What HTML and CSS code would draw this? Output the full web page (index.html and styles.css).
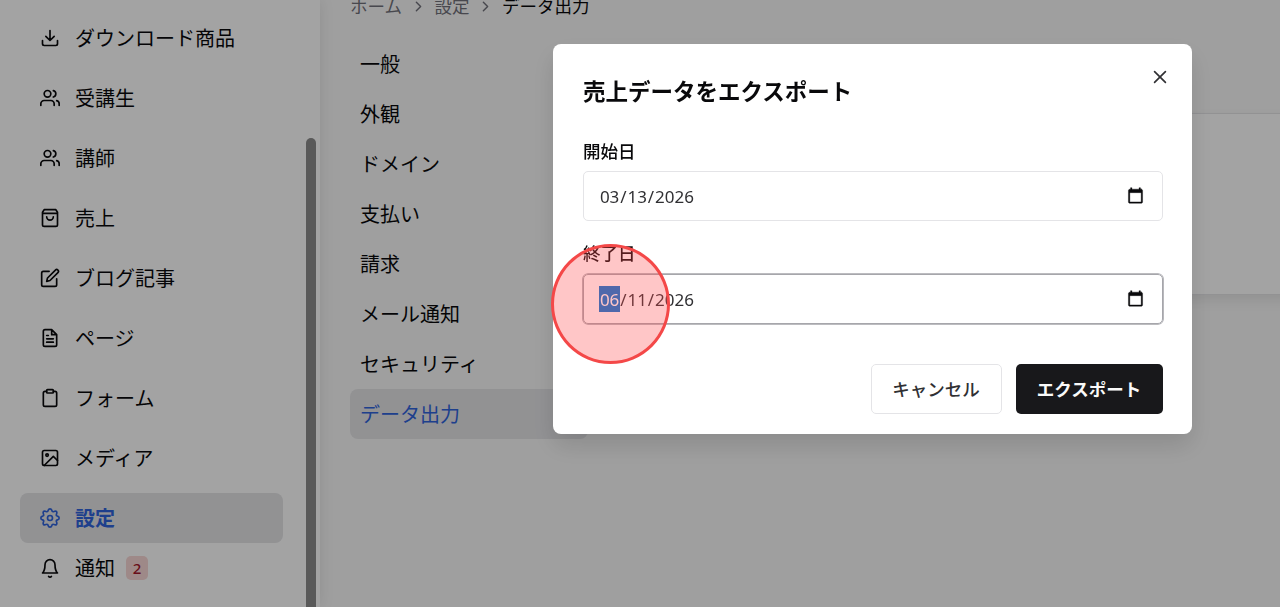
FILE: index.html
```html
<!DOCTYPE html>
<html lang="ja">
<head>
  <meta charset="UTF-8">
  <meta name="viewport" content="width=device-width, initial-scale=1.0">
  <title>データ出力</title>
  <link rel="stylesheet" href="styles.css">
</head>
<body>
  <div class="page">
    <aside class="sidebar">
      <nav class="nav">
        <a class="nav-item">
          <svg viewBox="0 0 24 24"><path d="M3 15v4a2 2 0 0 0 2 2h14a2 2 0 0 0 2-2v-4M12 3v12M7 10l5 5 5-5"/></svg>
          <span>ダウンロード商品</span>
        </a>
        <a class="nav-item">
          <svg viewBox="0 0 24 24"><path d="M17 21v-2a4 4 0 0 0-4-4H5a4 4 0 0 0-4 4v2M23 21v-2a4 4 0 0 0-3-3.870M16 3.130a4 4 0 0 1 0 7.750"/><circle cx="9" cy="7" r="4"/></svg>
          <span>受講生</span>
        </a>
        <a class="nav-item">
          <svg viewBox="0 0 24 24"><path d="M17 21v-2a4 4 0 0 0-4-4H5a4 4 0 0 0-4 4v2M23 21v-2a4 4 0 0 0-3-3.870M16 3.130a4 4 0 0 1 0 7.750"/><circle cx="9" cy="7" r="4"/></svg>
          <span>講師</span>
        </a>
        <a class="nav-item">
          <svg viewBox="0 0 24 24"><path d="M5 2L3 5v15a2 2 0 0 0 2 2h14a2 2 0 0 0 2-2V5l-2-3zM3 6.5h18M16 10.500a4 4 0 0 1-8 0"/></svg>
          <span>売上</span>
        </a>
        <a class="nav-item">
          <svg viewBox="0 0 24 24"><path d="M11 4H4a2 2 0 0 0-2 2v14a2 2 0 0 0 2 2h14a2 2 0 0 0 2-2v-7"/><path d="M18.500 2.500a2.120 2.120 0 0 1 3 3L12 15l-4 1 1-4z"/></svg>
          <span>ブログ記事</span>
        </a>
        <a class="nav-item">
          <svg viewBox="0 0 24 24"><path d="M14 2H6a2 2 0 0 0-2 2v16a2 2 0 0 0 2 2h12a2 2 0 0 0 2-2V8zM14 2v6h6M16 13H8M16 17H8M10 9H8"/></svg>
          <span>ページ</span>
        </a>
        <a class="nav-item">
          <svg viewBox="0 0 24 24"><path d="M16 4h2a2 2 0 0 1 2 2v14a2 2 0 0 1-2 2H6a2 2 0 0 1-2-2V6a2 2 0 0 1 2-2h2"/><rect x="8" y="2" width="8" height="4" rx="1"/></svg>
          <span>フォーム</span>
        </a>
        <a class="nav-item">
          <svg viewBox="0 0 24 24"><rect x="3" y="3" width="18" height="18" rx="2"/><circle cx="8.500" cy="8.500" r="1.500"/><path d="M21 15l-5-5L5 21"/></svg>
          <span>メディア</span>
        </a>
      </nav>
      <nav class="nav-bottom">
        <a class="nav-item active">
          <svg viewBox="0 0 24 24"><circle cx="12" cy="12" r="3"/><path d="M12 1C14.500 1 14 3.300 14.800 4.200C16 5.300 18 2.700 19.800 4.200C21.300 6 18.700 8 19.800 9.200C20.700 10 23 9.500 23 12C23 14.500 20.700 14 19.800 14.800C18.700 16 21.300 18 19.800 19.800C18 21.300 16 18.700 14.800 19.800C14 20.700 14.500 23 12 23C9.500 23 10 20.700 9.200 19.800C8 18.700 6 21.300 4.200 19.800C2.700 18 5.300 16 4.200 14.800C3.300 14 1 14.500 1 12C1 9.500 3.300 10 4.200 9.200C5.300 8 2.700 6 4.200 4.200C6 2.700 8 5.300 9.200 4.200C10 3.300 9.500 1 12 1z"/></svg>
          <span>設定</span>
        </a>
        <a class="nav-item">
          <svg viewBox="0 0 24 24"><path d="M18 8A6 6 0 0 0 6 8c0 7-3 10-3 10h18s-3-3-3-10M10.300 22a2 2 0 0 0 3.400 0"/></svg>
          <span>通知</span>
          <span class="badge">2</span>
        </a>
      </nav>
      <div class="scrollbar"></div>
    </aside>

    <main class="main">
      <div class="breadcrumb">
        <span>ホーム</span>
        <svg viewBox="0 0 24 24"><path d="M9 6l6 6-6 6"/></svg>
        <span>設定</span>
        <svg viewBox="0 0 24 24"><path d="M9 6l6 6-6 6"/></svg>
        <span class="current">データ出力</span>
      </div>
      <div class="content">
        <nav class="submenu">
          <a>一般</a>
          <a>外観</a>
          <a>ドメイン</a>
          <a>支払い</a>
          <a>請求</a>
          <a>メール通知</a>
          <a>セキュリティ</a>
          <a class="active">データ出力</a>
        </nav>
        <section class="card"></section>
      </div>
    </main>
  </div>

  <div class="overlay">
    <div class="modal">
      <button class="close" aria-label="閉じる">
        <svg viewBox="0 0 24 24"><path d="M5.500 5.500l13 13M18.500 5.500l-13 13"/></svg>
      </button>
      <h2>売上データをエクスポート</h2>

      <label>開始日</label>
      <div class="date-input">
        <span class="date"><span>03</span>/<span>13</span>/<span>2026</span></span>
        <svg viewBox="0 0 24 24"><path d="M20 3h-1V1h-2v2H7V1H5v2H4c-1.100 0-2 .9-2 2v16c0 1.100.9 2 2 2h16c1.100 0 2-.9 2-2V5c0-1.100-.9-2-2-2zm0 18H4V8h16v13z"/></svg>
      </div>

      <label>終了日</label>
      <div class="date-input focused">
        <span class="date"><span class="selected">06</span>/<span>11</span>/<span>2026</span></span>
        <svg viewBox="0 0 24 24"><path d="M20 3h-1V1h-2v2H7V1H5v2H4c-1.100 0-2 .9-2 2v16c0 1.100.9 2 2 2h16c1.100 0 2-.9 2-2V5c0-1.100-.9-2-2-2zm0 18H4V8h16v13z"/></svg>
      </div>

      <div class="actions">
        <button class="btn btn-cancel">キャンセル</button>
        <button class="btn btn-export">エクスポート</button>
      </div>
      <div class="click-marker"></div>
    </div>
  </div>
</body>
</html>
```
FILE: styles.css
```css
* {
  box-sizing: border-box;
}

body {
  margin: 0;
  height: 607px;
  overflow: hidden;
  font-family: "Noto Sans CJK JP", "Noto Sans", sans-serif;
  color: #09090b;
  background-color: #f9f9f9;
}

svg {
  flex: none;
  fill: none;
  stroke: currentColor;
  stroke-width: 2;
  stroke-linecap: round;
  stroke-linejoin: round;
}

.page {
  display: flex;
  height: 607px;
}

.sidebar {
  position: relative;
  flex: none;
  width: 320px;
  padding: 13px 37px 0 20px;
  background-color: #fff;
  box-shadow: 0 0 14px rgba(0, 0, 0, 0.1);
}

.nav {
  display: flex;
  flex-direction: column;
  gap: 10px;
  margin-bottom: 10px;
}

.nav-item {
  display: flex;
  align-items: center;
  height: 50px;
  padding: 0 20px;
  border-radius: 8px;
  font-size: 20px;
  line-height: 30px;
}

.nav-item svg {
  width: 20px;
  height: 20px;
  margin-right: 15px;
}

.nav-item.active {
  background-color: #e4e4e7;
  color: #2f63dc;
  font-weight: 700;
}

.badge {
  margin-left: 11px;
  width: 22px;
  height: 24px;
  border-radius: 5px;
  background-color: #f8d7d5;
  color: #a5162a;
  font-family: "Noto Sans", sans-serif;
  font-size: 15px;
  font-weight: 500;
  line-height: 25px;
  text-align: center;
}

.scrollbar {
  position: absolute;
  top: 138px;
  right: 4px;
  bottom: -10px;
  width: 10px;
  border-radius: 5px;
  background-color: #8b8b8b;
}

.main {
  flex: 1;
  padding-left: 30px;
}

.breadcrumb {
  display: flex;
  align-items: center;
  height: 26px;
  margin-top: -7px;
  font-size: 17.5px;
  line-height: 26px;
  color: #71717a;
}

.breadcrumb svg {
  width: 17px;
  height: 17px;
  margin: 0 7.75px;
}

.breadcrumb .current {
  color: #09090b;
}

.content {
  display: flex;
  gap: 40px;
  margin-top: 20px;
}

.submenu {
  flex: none;
  width: 238px;
}

.submenu a {
  display: block;
  height: 50px;
  padding-left: 10px;
  border-radius: 8px;
  font-size: 20px;
  line-height: 50px;
}

.submenu a.active {
  background-color: #e4e4e7;
  color: #2f63dc;
}

.card {
  flex: 1;
  height: 182px;
  margin: 74px -20px 0 0;
  border: 1px solid #e4e4e7;
  background-color: #fff;
  box-shadow: 0 6px 12px rgba(0, 0, 0, 0.08);
}

.overlay {
  position: fixed;
  inset: 0;
  background-color: rgba(0, 0, 0, 0.36);
}

.modal {
  position: absolute;
  top: 44px;
  left: 553px;
  width: 639px;
  height: 390px;
  padding: 29px 29.5px 20px 30px;
  border-radius: 8px;
  background-color: #fff;
  box-shadow: 0 12px 24px rgba(0, 0, 0, 0.12);
}

.close {
  position: absolute;
  top: 22.5px;
  right: 22.5px;
  width: 20px;
  height: 20px;
  padding: 0;
  border: none;
  background: none;
  color: #303033;
}

.close svg {
  display: block;
  width: 20px;
  height: 20px;
}

.modal h2 {
  margin: 0 0 32px;
  font-size: 22.5px;
  font-weight: 700;
  line-height: 34px;
}

.modal label {
  display: block;
  height: 26px;
  margin-bottom: 6px;
  font-size: 17.5px;
  font-weight: 500;
  line-height: 24px;
}

.date-input {
  display: flex;
  align-items: center;
  justify-content: space-between;
  height: 50px;
  margin-bottom: 20px;
  padding: 0 18px 0 15px;
  border: 1px solid #e4e4e7;
  border-radius: 5px;
  color: #303033;
}

.date-input svg {
  width: 17px;
  height: 17px;
  margin-bottom: 2px;
  fill: #09090b;
  stroke: #09090b;
  stroke-width: 0.5;
}

.date-input.focused {
  margin-top: 7px;
  border-color: #a6a6ab;
  box-shadow: 0 0 0 0.8px #a6a6ab;
}

.date {
  display: flex;
  font-family: "Noto Sans", sans-serif;
  font-size: 17px;
  line-height: 27px;
}

.date span {
  padding: 0 0.9px;
}

.date .selected {
  height: 26px;
  background-color: #0078d7;
  color: #fff;
}

.actions {
  display: flex;
  justify-content: flex-end;
  gap: 14px;
  margin-top: 40px;
}

.btn {
  height: 50px;
  padding: 0;
  border-radius: 5px;
  font-family: inherit;
  font-size: 17.5px;
  line-height: 26px;
}

.btn-cancel {
  width: 131px;
  border: 1px solid #e4e4e7;
  background-color: #fff;
  color: #303033;
  font-weight: 500;
}

.btn-export {
  width: 147px;
  border: none;
  background-color: #18181b;
  color: #fafafa;
  font-weight: 700;
}

/* click highlight over the end date */
.click-marker {
  position: absolute;
  top: 200px;
  left: -2px;
  width: 119px;
  height: 120px;
  border: 3px solid #f44848;
  border-radius: 50%;
  background-color: rgba(255, 70, 75, 0.31);
}
```
